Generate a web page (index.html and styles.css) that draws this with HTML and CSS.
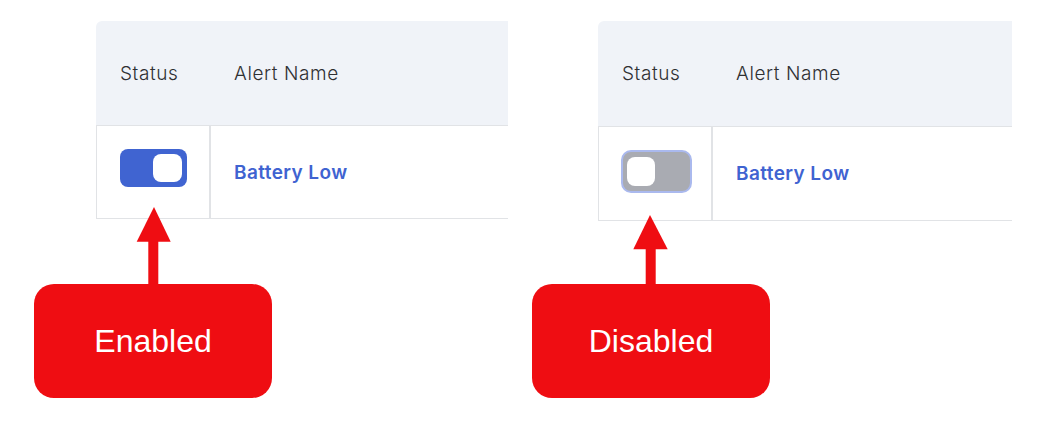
FILE: index.html
```html
<!DOCTYPE html>
<html lang="en">
<head>
<meta charset="utf-8">
<title>Alert status toggle</title>
<link rel="stylesheet" href="styles.css">
</head>
<body>
<div class="stage">
  <div class="panel panel-left">
    <div class="table">
      <div class="thead">
        <div class="th col-status">Status</div>
        <div class="th col-name">Alert Name</div>
      </div>
      <div class="trow">
        <div class="td col-status"><span class="toggle on"><span class="knob"></span></span></div>
        <div class="td col-name"><span class="alert-link">Battery Low</span></div>
      </div>
    </div>
    <div class="callout">Enabled</div>
    <svg class="arrow arrow-left" width="40" height="80" viewBox="0 0 40 80">
      <polygon points="20,2 2.7,36.7 36.7,36.7" fill="#ef0d12"/>
      <rect x="14.3" y="36" width="10" height="44" fill="#ef0d12"/>
    </svg>
  </div>
  <div class="panel panel-right">
    <div class="table">
      <div class="thead">
        <div class="th col-status">Status</div>
        <div class="th col-name">Alert Name</div>
      </div>
      <div class="trow">
        <div class="td col-status"><span class="toggle off"><span class="knob"></span></span></div>
        <div class="td col-name"><span class="alert-link">Battery Low</span></div>
      </div>
    </div>
    <div class="callout">Disabled</div>
    <svg class="arrow arrow-right" width="40" height="72" viewBox="0 0 40 72">
      <polygon points="20,2 3.3,36.3 37.7,36.3" fill="#ef0d12"/>
      <rect x="15.7" y="36" width="10" height="36" fill="#ef0d12"/>
    </svg>
  </div>
</div>
</body>
</html>
```
FILE: styles.css
```css
html, body {
  margin: 0;
  padding: 0;
  background: #ffffff;
}

body {
  width: 1062px;
  height: 430px;
  overflow: hidden;
  font-family: Inter, "Open Sans", sans-serif;
}

.stage {
  display: flex;
  gap: 24px;
  padding: 21px 0 0 34px;
}

.panel {
  position: relative;
  display: flex;
  flex-direction: column;
}

.panel-left {
  width: 474px;
}

.panel-right {
  width: 480px;
}

.table {
  display: flex;
  flex-direction: column;
}

.panel-left .table {
  margin-left: 62px;
  width: 412px;
}

.panel-right .table {
  margin-left: 66px;
  width: 414px;
}

.thead {
  display: flex;
  background: #f0f3f8;
  border-top-left-radius: 6px;
  height: 104px;
  border-bottom: 1px solid #e1e3e6;
}

.panel-right .thead {
  height: 105px;
}

.th {
  display: flex;
  align-items: center;
  padding-left: 24px;
  font-size: 19px;
  font-weight: 300;
  color: #2f3033;
  letter-spacing: 0.6px;
}

.col-status {
  width: 114px;
  box-sizing: border-box;
  flex: none;
}

.col-name {
  flex: 1;
}

.trow {
  display: flex;
  height: 92px;
  border-bottom: 1px solid #e1e3e6;
  border-left: 1px solid #e1e3e6;
}

.panel-right .trow {
  height: 93px;
}

.td {
  display: flex;
  align-items: center;
  box-sizing: border-box;
}

.td.col-status {
  width: 114px;
  padding-left: 23px;
  border-right: 2px solid #e1e3e6;
  padding-bottom: 8px;
}

.td.col-name {
  padding-left: 23px;
}

.alert-link {
  font-size: 19px;
  font-weight: 600;
  color: #3f63d1;
  letter-spacing: 0.4px;
}

.toggle {
  display: flex;
  align-items: center;
  box-sizing: border-box;
  border-radius: 8px;
}

.toggle.on {
  width: 67px;
  height: 38px;
  background: #4064d1;
  justify-content: flex-end;
  padding-right: 5px;
}

.toggle.off {
  width: 71px;
  height: 43px;
  margin-left: -1px;
  margin-top: 4px;
  background: #a9abb2;
  border: 2px solid #aab9ee;
  border-radius: 10px;
  justify-content: flex-start;
  padding-left: 4px;
}

.knob {
  display: block;
  width: 29px;
  height: 28px;
  background: #ffffff;
  border-radius: 8px;
}

.toggle.off .knob {
  height: 29px;
  width: 28px;
}

.callout {
  display: flex;
  align-items: center;
  justify-content: center;
  height: 114px;
  background: #ef0d12;
  border-radius: 20px;
  color: #ffffff;
  font-family: "Liberation Sans", Arial, sans-serif;
  font-size: 32px;
  margin-top: 65px;
}

.panel-left .callout {
  width: 238px;
}

.panel-right .callout {
  width: 238px;
  margin-top: 63px;
}

.arrow {
  position: absolute;
}

.arrow-left {
  left: 100px;
  top: 184px;
}

.arrow-right {
  left: 98px;
  top: 192px;
}
```
